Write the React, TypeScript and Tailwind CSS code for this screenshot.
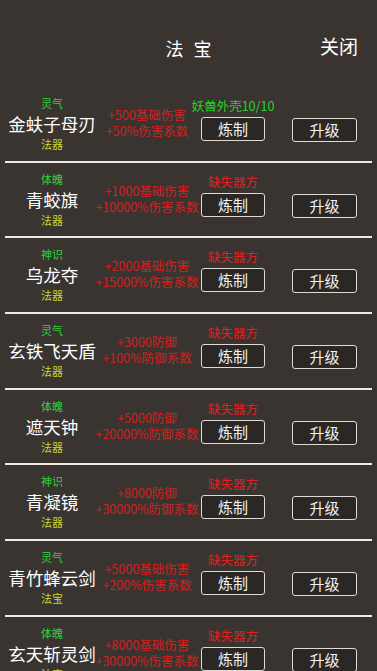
import React from 'react';

type Item = {
  kind: string;
  name: string;
  grade: string;
  lines: [string, string];
  status: string;
  ok?: boolean;
};

const items: Item[] = [
  { kind: '灵气', name: '金蚨子母刃', grade: '法器', lines: ['+500基础伤害', '+50%伤害系数'], status: '妖兽外壳10/10', ok: true },
  { kind: '体魄', name: '青蛟旗', grade: '法器', lines: ['+1000基础伤害', '+10000%伤害系数'], status: '缺失器方' },
  { kind: '神识', name: '乌龙夺', grade: '法器', lines: ['+2000基础伤害', '+15000%伤害系数'], status: '缺失器方' },
  { kind: '灵气', name: '玄铁飞天盾', grade: '法器', lines: ['+3000防御', '+100%防御系数'], status: '缺失器方' },
  { kind: '体魄', name: '遮天钟', grade: '法器', lines: ['+5000防御', '+20000%防御系数'], status: '缺失器方' },
  { kind: '神识', name: '青凝镜', grade: '法器', lines: ['+8000防御', '+30000%防御系数'], status: '缺失器方' },
  { kind: '灵气', name: '青竹蜂云剑', grade: '法宝', lines: ['+5000基础伤害', '+200%伤害系数'], status: '缺失器方' },
  { kind: '体魄', name: '玄天斩灵剑', grade: '法宝', lines: ['+8000基础伤害', '+30000%伤害系数'], status: '缺失器方' },
];

const font = { fontFamily: '"Noto Sans CJK SC", "Noto Sans", sans-serif' };

const Row: React.FC<{ item: Item }> = ({ item }) => {
  return (
    <div>
      <div className="flex h-[73.67px]">
        <div className="w-[104px] flex flex-col items-center pt-[9px]">
          <div className="text-[11px] leading-[14px] text-[#2fd23c]">{item.kind}</div>
          <div className="mt-[3px] text-[17.5px] leading-[22px] text-white whitespace-nowrap">{item.name}</div>
          <div className="mt-[2px] text-[11px] leading-[14px] text-[#c9d62e]">{item.grade}</div>
        </div>
        <div className="w-[86px] flex flex-col items-center pt-[20px] gap-[1px]">
          {item.lines.map((l) => (
            <div key={l} className="text-[12.5px] leading-[15px] text-[#d41f1f] whitespace-nowrap">
              {l}
            </div>
          ))}
        </div>
        <div className="flex pl-[11px]">
          <div className="w-[64px] flex flex-col items-center pt-[12px]">
            <div
              className={
                item.ok
                  ? 'text-[12.5px] leading-[14px] text-[#26d626] whitespace-nowrap'
                  : 'text-[12.5px] leading-[14px] text-[#e02020] whitespace-nowrap'
              }
            >
              {item.status}
            </div>
            <button className="mt-[4px] w-[64px] h-[24px] rounded-[3px] border-[1.5px] border-[#dedad6] bg-[#2b2725] text-[#f2f2f2] text-[15px] leading-[20px]">
              炼制
            </button>
          </div>
          <div className="ml-[27px] pt-[30px]">
            <button className="w-[65px] h-[24px] rounded-[3px] border-[1.5px] border-[#dedad6] bg-[#2b2725] text-[#f2f2f2] text-[15px] leading-[20px]">
              升级
            </button>
          </div>
        </div>
      </div>
      <div className="mx-[5px] h-[2px] bg-[#ece9e6]" />
    </div>
  );
};

const App: React.FC = () => {
  return (
    <div className="w-[377px] h-[671px] overflow-hidden bg-[#3a3431]" style={font}>
      <div className="relative h-[87px]">
        <div className="pt-[36px] flex justify-center gap-[10px] text-[18px] leading-[24px] text-white">
          <span>法</span>
          <span>宝</span>
        </div>
        <div className="absolute right-[19px] top-[34px] text-[19px] leading-[24px] text-white">关闭</div>
      </div>
      {items.map((it) => (
        <Row key={it.name} item={it} />
      ))}
    </div>
  );
};

export default App;
